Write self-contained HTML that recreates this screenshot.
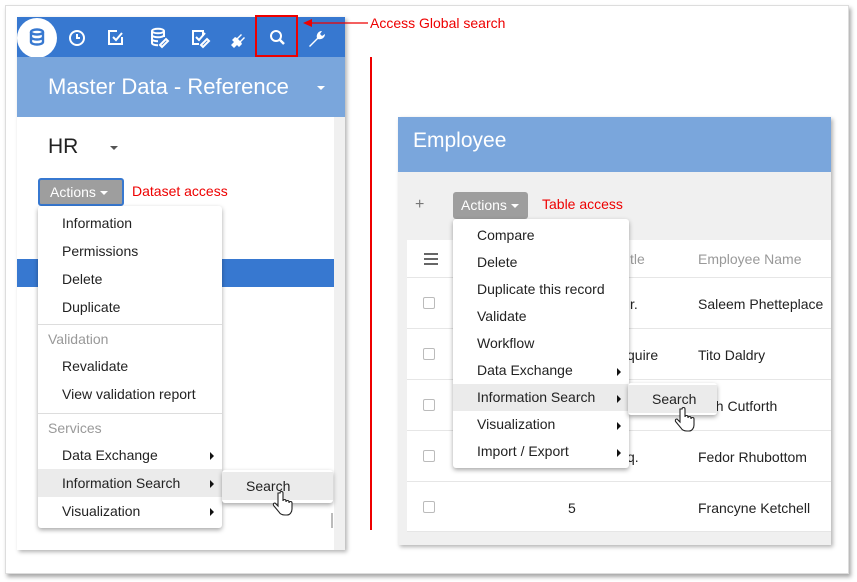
<!DOCTYPE html>
<html><head><meta charset="utf-8"><style>
*{box-sizing:border-box;margin:0;padding:0}
body{width:857px;height:582px;background:#fff;font-family:"Liberation Sans",sans-serif;position:relative;overflow:hidden;color:#222}
.abs{position:absolute}
.frame{left:5px;top:5px;width:844px;height:569px;border:1px solid #ddd;box-shadow:2px 3px 4px rgba(0,0,0,.35);background:#fff}
.lp{left:17px;top:17px;width:328px;height:533px;background:#fff;box-shadow:2px 2px 4px rgba(0,0,0,.3)}
.tb{left:17px;top:17px;width:328px;height:40px;background:#3778d0}
.mh{left:17px;top:57px;width:328px;height:60px;background:#7aa6dc;color:#fff;font-size:22px}
.menu{background:#fff;border-radius:3px;box-shadow:0 2px 5px rgba(0,0,0,.35);font-size:14px;color:#222}
.mi{height:28px;line-height:28px;padding-left:24px;position:relative}
.mi.h{background:#ebebeb}
.mi .ar{position:absolute;right:8px;top:11px;width:0;height:0;border-top:4px solid transparent;border-bottom:4px solid transparent;border-left:4px solid #111}
.sec{height:28px;line-height:28px;padding-left:10px;color:#999;border-top:1px solid #ddd}
.btn{background:#9e9e9e;color:#fff;font-size:14px;border-radius:3px}
.red{color:#e00;font-size:14px}
.cb{position:absolute;left:16px;width:12px;height:12px;border:1px solid #bbb;border-radius:2px}
.row{position:absolute;left:407px;width:424px;height:51px;border-top:1px solid #e6e6e6;font-size:14px}
</style></head><body>
<div class="abs frame"></div>
<div class="abs lp"></div>
<div class="abs" style="left:334px;top:117px;width:11px;height:433px;background:#f0f0f0"></div>
<div class="abs tb"></div>
<div class="abs" style="left:17px;top:18px;width:40px;height:40px;border-radius:50%;background:#fff"></div>
<svg class="abs" style="left:17px;top:17px" width="328" height="40" viewBox="0 0 328 40">
<g fill="none" stroke="#3778d0" stroke-width="2.4"><ellipse cx="20" cy="15" rx="6" ry="2.5"/><path d="M14 15v10c0 1.5 3 2.5 6 2.5s6-1 6-2.5V15M14 20c0 1.5 3 2.5 6 2.5s6-1 6-2.5"/></g>
<g fill="none" stroke="#fff" stroke-width="2">
<circle cx="60" cy="21" r="7"/><path d="M60 17v4h3"/>
<path d="M100 14h-8v13h13v-7"/><path d="M96 20l3 3 6-7"/>
<ellipse cx="141" cy="14" rx="6" ry="2.3"/><path d="M135 14v12c0 1.5 3 2.3 6 2.3M147 14v6M135 18c0 1.5 3 2.3 6 2.3s6-1 6-2.3M135 22c0 1.5 3 2.3 6 2.3"/><path d="M143 28l6-6 2 2-6 6z"/>
<path d="M183 14h-7v13h6M176 14h10v5"/><path d="M179 20l3 3 6-7M184 28l6-6 2 2-6 6z"/>
<circle cx="259" cy="19" r="5"/><path d="M263 23l4 4" stroke-width="2.5"/>
</g>
<path d="M214 28l3-3-2-2 3-3 2 1 4-4 1 1-4 4 2 2 4-4 1 1-4 4 1 2-3 3-2-2-3 3z" fill="#fff"/>
<path d="M292 29l8-8c-1-3 1-7 5-7l-2 3 2 2 3-2c0 4-4 6-7 5l-8 8z" fill="#fff"/>
</svg>
<div class="abs" style="left:255px;top:15px;width:43px;height:42px;border:2px solid #e00"></div>
<svg class="abs" style="left:300px;top:15px" width="70" height="16"><path d="M6 8h62" stroke="#e00" stroke-width="1.3"/><path d="M3 8l9-4v8z" fill="#e00"/></svg>
<div class="abs red" style="left:370px;top:15px">Access Global search</div>
<div class="abs mh"><span class="abs" style="left:31px;top:17px">Master Data - Reference</span><span class="abs" style="left:300px;top:29px;border-left:4px solid transparent;border-right:4px solid transparent;border-top:4px solid #fff"></span></div>
<div class="abs" style="left:48px;top:135px;font-size:21px">HR</div>
<div class="abs" style="left:110px;top:146px;border-left:4px solid transparent;border-right:4px solid transparent;border-top:4px solid #555"></div>
<div class="abs btn" style="left:38px;top:178px;width:86px;height:28px;border:2px solid #3778d0;line-height:24px;padding-left:10px">Actions <span style="display:inline-block;border-left:4px solid transparent;border-right:4px solid transparent;border-top:4px solid #fff;vertical-align:middle"></span></div>
<div class="abs red" style="left:132px;top:183px">Dataset access</div>
<div class="abs" style="left:17px;top:259px;width:317px;height:28px;background:#3778d0"></div>
<div class="abs menu" style="left:38px;top:206px;width:184px;height:322px">
<div style="height:3px"></div>
<div class="mi">Information</div><div class="mi">Permissions</div><div class="mi">Delete</div><div class="mi">Duplicate</div>
<div style="height:3px"></div>
<div class="sec">Validation</div><div class="mi">Revalidate</div><div class="mi">View validation report</div>
<div style="height:5px"></div>
<div class="sec">Services</div><div class="mi">Data Exchange<span class="ar"></span></div><div class="mi h">Information Search<span class="ar"></span></div><div class="mi">Visualization<span class="ar"></span></div>
</div>
<div class="abs menu" style="left:222px;top:470px;width:111px;height:33px;padding:2px 0"><div style="background:#ebebeb;height:28px;line-height:28px;padding-left:24px;font-size:14px">Search</div></div>
<div class="abs" style="left:331px;top:513px;width:2px;height:15px;border-left:1px solid #bbb;border-right:1px solid #bbb"></div>
<div class="abs" style="left:370px;top:57px;width:2px;height:473px;background:#e00"></div>
<div class="abs" style="left:398px;top:117px;width:433px;height:428px;background:#f0f0f0;box-shadow:2px 2px 4px rgba(0,0,0,.3)"></div>
<div class="abs" style="left:398px;top:117px;width:433px;height:55px;background:#7aa6dc;color:#fff;font-size:21px;padding:12px 0 0 15px">Employee</div>
<div class="abs" style="left:415px;top:196px;color:#777;font-size:16px">+</div>
<div class="abs btn" style="left:453px;top:192px;width:75px;height:27px;line-height:27px;padding-left:8px">Actions <span style="display:inline-block;border-left:4px solid transparent;border-right:4px solid transparent;border-top:4px solid #fff;vertical-align:middle"></span></div>
<div class="abs red" style="left:542px;top:196px">Table access</div>
<div class="abs" style="left:407px;top:240px;width:424px;height:292px;background:#fff"></div>
<div class="abs" style="left:424px;top:253px;width:14px;height:12px;border-top:2px solid #666;border-bottom:2px solid #666"><div style="margin-top:3px;height:2px;background:#666"></div></div>
<div class="abs" style="left:630px;top:251px;color:#999;font-size:14px">tle</div>
<div class="abs" style="left:698px;top:251px;color:#999;font-size:14px">Employee Name</div>
<div class="row" style="top:277px"><span class="cb" style="top:19px"></span><span class="abs" style="left:223px;top:18px">r.</span><span class="abs" style="left:291px;top:18px">Saleem Phetteplace</span></div>
<div class="row" style="top:328px"><span class="cb" style="top:19px"></span><span class="abs" style="left:213px;top:18px">squire</span><span class="abs" style="left:291px;top:18px">Tito Daldry</span></div>
<div class="row" style="top:379px"><span class="cb" style="top:19px"></span><span class="abs" style="left:301px;top:18px">ah Cutforth</span></div>
<div class="row" style="top:430px"><span class="cb" style="top:19px"></span><span class="abs" style="left:213px;top:18px">sq.</span><span class="abs" style="left:291px;top:18px">Fedor Rhubottom</span></div>
<div class="row" style="top:481px;border-bottom:1px solid #e6e6e6"><span class="cb" style="top:19px"></span><span class="abs" style="left:161px;top:18px">5</span><span class="abs" style="left:291px;top:18px">Francyne Ketchell</span></div>
<div class="abs menu" style="left:453px;top:219px;width:176px;height:249px;padding-top:2px">
<div class="mi">Compare</div><div class="mi" style="height:27px;line-height:27px">Delete</div><div class="mi" style="height:27px;line-height:27px">Duplicate this record</div><div class="mi" style="height:27px;line-height:27px">Validate</div><div class="mi" style="height:27px;line-height:27px">Workflow</div><div class="mi" style="height:27px;line-height:27px">Data Exchange<span class="ar"></span></div><div class="mi h" style="height:27px;line-height:27px">Information Search<span class="ar"></span></div><div class="mi" style="height:27px;line-height:27px">Visualization<span class="ar"></span></div><div class="mi" style="height:27px;line-height:27px">Import / Export<span class="ar"></span></div>
</div>
<div class="abs menu" style="left:628px;top:383px;width:89px;height:32px;padding:2px 0"><div style="background:#ebebeb;height:28px;line-height:28px;padding-left:24px;font-size:14px">Search</div></div>
<svg class="abs" style="left:270px;top:490px" width="24" height="30"><path d="M8 3v13l-3-3c-2 0-2 2-1 3l5 6c1 2 3 3 6 3h2c3 0 5-3 5-6v-6c0-2-3-2-3 0v-1c0-2-3-2-3 0v-1c0-2-3-2-3 0V3c0-2-3-2-3 0z" fill="#fff" stroke="#222" stroke-width="1.1"/></svg>
<svg class="abs" style="left:672px;top:406px" width="24" height="30"><path d="M8 3v13l-3-3c-2 0-2 2-1 3l5 6c1 2 3 3 6 3h2c3 0 5-3 5-6v-6c0-2-3-2-3 0v-1c0-2-3-2-3 0v-1c0-2-3-2-3 0V3c0-2-3-2-3 0z" fill="#fff" stroke="#222" stroke-width="1.1"/></svg>
</body></html>
